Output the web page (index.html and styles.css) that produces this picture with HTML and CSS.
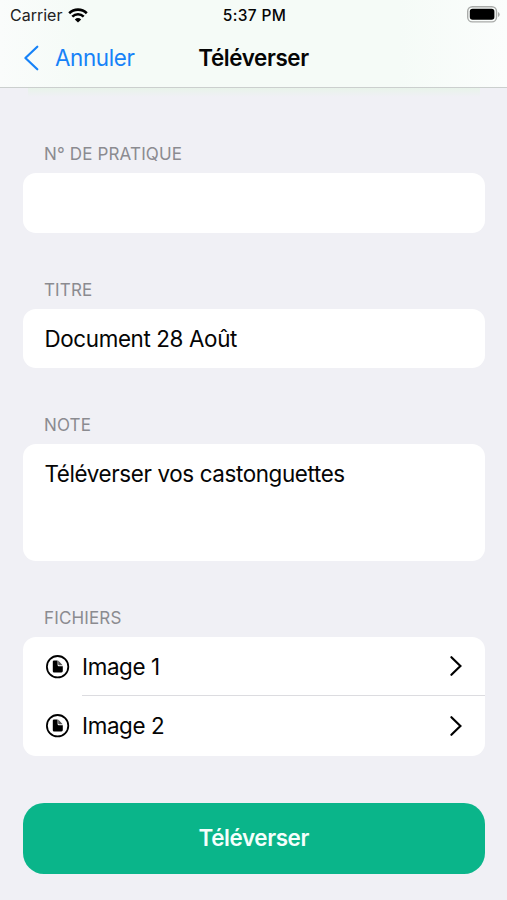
FILE: index.html
```
<!DOCTYPE html>
<html lang="fr">
<head>
    <meta charset="UTF-8">
    <meta name="viewport" content="width=device-width, initial-scale=1.0">
    <title>Téléverser</title>
    <link rel="stylesheet" href="styles.css">
</head>
<body>
    <header class="header">
        <div class="status-bar">
            <div class="carrier">
                <span class="carrier-name">Carrier</span>
                <svg class="wifi" width="20" height="15" viewBox="0 0 20 15">
                    <path d="M1.2 5.2a12.6 12.6 0 0 1 17.6 0M4.3 8.6a8.2 8.2 0 0 1 11.4 0" fill="none" stroke="#000" stroke-width="2.6"/>
                    <path d="M10 14.6l-3.2-3.2a4.9 4.9 0 0 1 6.4 0z"/>
                </svg>
            </div>
            <span class="clock">5:37 PM</span>
            <svg class="battery" width="33" height="17" viewBox="0 0 33 17">
                <rect x="0.7" y="0.7" width="28.8" height="15.2" rx="4.6" fill="none" stroke="#a9aba9" stroke-width="1.4"/>
                <rect x="2.8" y="2.8" width="24.6" height="11" rx="2.8"/>
                <path d="M31 6v5q1.7-.7 1.7-2.5T31 6z" fill="#a9aba9"/>
            </svg>
        </div>
        <nav class="nav-bar">
            <a class="back" href="#">
                <svg width="16" height="26" viewBox="0 0 16 26">
                    <path d="M14.3 1.7L2.4 13l11.9 11.3" fill="none" stroke="currentColor" stroke-width="2.2" stroke-linecap="round" stroke-linejoin="round"/>
                </svg>
                <span class="back-text">Annuler</span>
            </a>
            <h1 class="title">Téléverser</h1>
        </nav>
    </header>

    <main class="form">
        <section class="group">
            <h2 class="label">N° DE PRATIQUE</h2>
            <div class="card field"></div>
        </section>

        <section class="group">
            <h2 class="label">TITRE</h2>
            <div class="card field">Document 28 Août</div>
        </section>

        <section class="group">
            <h2 class="label">NOTE</h2>
            <div class="card field note">Téléverser vos castonguettes</div>
        </section>

        <section class="group">
            <h2 class="label">FICHIERS</h2>
            <div class="card files">
                <div class="file">
                    <svg class="file-icon" width="26" height="26" viewBox="0 0 26 26">
                        <circle cx="12.6" cy="12.7" r="10.7" fill="none" stroke="#000" stroke-width="1.8"/>
                        <path d="M9 6.4h3.6v4.6q0 1.2 1.2 1.2h4v4.9q0 1.3-1.3 1.3H9q-1.2 0-1.2-1.2V7.6q0-1.2 1.2-1.2z"/>
                        <path d="M13.2 6.5l4.5 4.7h-3.6q-.9 0-.9-.9z" fill="#555"/>
                    </svg>
                    <div class="file-row">
                        <span>Image 1</span>
                        <svg class="chevron" width="14" height="22" viewBox="0 0 14 22">
                            <path d="M2.4 2.2L11.4 11l-9 8.8" fill="none" stroke="#000" stroke-width="2.2" stroke-linecap="round"/>
                        </svg>
                    </div>
                </div>
                <div class="file">
                    <svg class="file-icon" width="26" height="26" viewBox="0 0 26 26">
                        <circle cx="12.6" cy="12.7" r="10.7" fill="none" stroke="#000" stroke-width="1.8"/>
                        <path d="M9 6.4h3.6v4.6q0 1.2 1.2 1.2h4v4.9q0 1.3-1.3 1.3H9q-1.2 0-1.2-1.2V7.6q0-1.2 1.2-1.2z"/>
                        <path d="M13.2 6.5l4.5 4.7h-3.6q-.9 0-.9-.9z" fill="#555"/>
                    </svg>
                    <div class="file-row">
                        <span>Image 2</span>
                        <svg class="chevron" width="14" height="22" viewBox="0 0 14 22">
                            <path d="M2.4 2.2L11.4 11l-9 8.8" fill="none" stroke="#000" stroke-width="2.2" stroke-linecap="round"/>
                        </svg>
                    </div>
                </div>
            </div>
        </section>

        <button class="upload-btn">Téléverser</button>
    </main>
</body>
</html>
```
FILE: styles.css
```
:root {
    --bg-main: #f0f0f5;
    --bg-card: #ffffff;
    --text-primary: #050505;
    --text-secondary: #8b8b90;
    --blue: #1682f8;
    --green: #0ab58a;
}

* {
    box-sizing: border-box;
}

body {
    margin: 0;
    font-family: Inter, "Liberation Sans", sans-serif;
    font-size: 22.4px;
    letter-spacing: -0.37px;
    background-color: var(--bg-main);
    color: var(--text-primary);
    height: 900px;
    overflow: hidden;
}

.header {
    height: 88px;
    background: linear-gradient(90deg, #fafcfb 0, #f5fbf7 80px, #f5fbf7 400px, #fbfdfc 100%);
    border-bottom: 1px solid #cbcfce;
}

.status-bar {
    display: grid;
    grid-template-columns: 1fr auto 1fr;
    align-items: center;
    height: 30px;
    padding: 0 7px 0 10px;
    font-size: 16px;
    letter-spacing: 0;
}

.carrier {
    display: flex;
    align-items: center;
    gap: 6px;
}

.carrier-name {
    color: #222;
}

.clock {
    font-weight: 550;
    font-size: 15.5px;
    letter-spacing: 0.35px;
    margin-right: 1px;
}

.battery {
    justify-self: end;
    margin-bottom: 2px;
}

.nav-bar {
    display: grid;
    grid-template-columns: 1fr auto 1fr;
    align-items: center;
    height: 55px;
    padding: 0 23px;
}

.back {
    display: flex;
    align-items: center;
    gap: 16px;
    color: var(--blue);
    text-decoration: none;
}

.title {
    margin: 0;
    font-size: 22.4px;
    font-weight: 600;
}

.form {
    padding: 56.3px 22px 0 22.5px;
    background: linear-gradient(#e8f3ea, var(--bg-main)) 28px 0 / 452px 9px no-repeat;
}

.group {
    margin-bottom: 47px;
}

.label {
    margin: 0 0 9px 21.5px;
    font-size: 17px;
    line-height: 20px;
    font-weight: 400;
    letter-spacing: 0.15px;
    color: var(--text-secondary);
}

.card {
    background: var(--bg-card);
    border-radius: 13px;
}

.field {
    display: flex;
    align-items: center;
    height: 59.4px;
    padding: 0 22px;
}

.note {
    align-items: flex-start;
    height: 117px;
    padding-top: 16px;
}

.files {
    height: 118.5px;
}

.file {
    display: flex;
    padding-left: 22px;
    height: 59.2px;
    align-items: center;
}

.file-icon {
    margin-right: 11.5px;
}

.file-row {
    display: flex;
    flex: 1;
    align-items: center;
    justify-content: space-between;
    height: 100%;
    padding-right: 22px;
    border-bottom: 1px solid #dcdce0;
}

.file:last-child .file-row {
    border-bottom: none;
}

.upload-btn {
    display: block;
    width: 100%;
    height: 71px;
    padding: 0 0 1px;
    border: none;
    border-radius: 21px;
    background: var(--green);
    color: #f4fffc;
    font: 600 22.4px Inter, "Liberation Sans", sans-serif;
    letter-spacing: -0.37px;
    cursor: pointer;
}
```
